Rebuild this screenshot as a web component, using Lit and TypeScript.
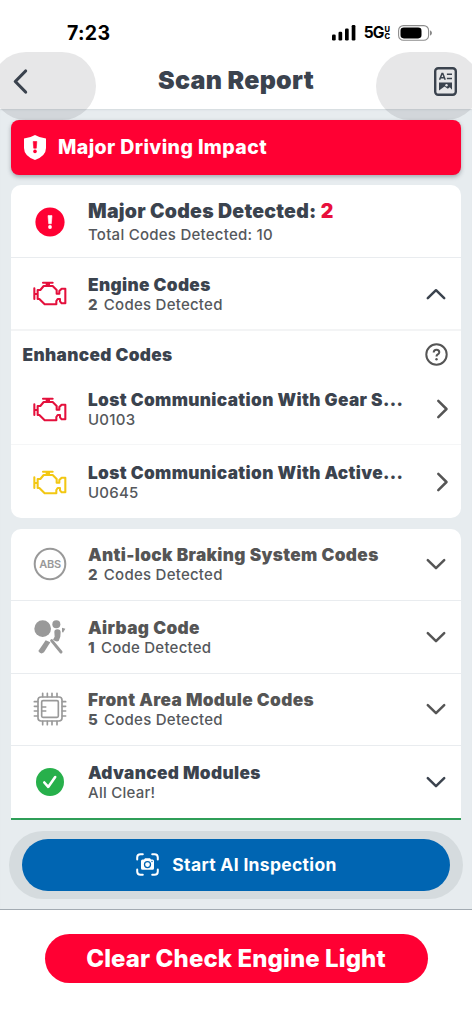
import { LitElement, html, css, svg, nothing } from "lit";
import { customElement } from "lit/decorators.js";
import { classMap } from "lit/directives/class-map.js";

type IconName = "alert" | "engine" | "abs" | "airbag" | "chip" | "check";
type Chevron = "up" | "down" | "right";

interface CodeRow {
  icon: IconName;
  tone: string;
  title: string;
  count?: string;
  sub: string;
  chevron: Chevron;
  muted?: boolean;
}

const engineRow: CodeRow = { icon: "engine", tone: "red", title: "Engine Codes", count: "2", sub: "Codes Detected", chevron: "up" };

const enhancedRows: CodeRow[] = [
  { icon: "engine", tone: "red", title: "Lost Communication With Gear S...", sub: "U0103", chevron: "right" },
  { icon: "engine", tone: "yellow", title: "Lost Communication With Active...", sub: "U0645", chevron: "right" },
];

const moduleRows: CodeRow[] = [
  { icon: "abs", tone: "gray", title: "Anti-lock Braking System Codes", count: "2", sub: "Codes Detected", chevron: "down", muted: true },
  { icon: "airbag", tone: "gray", title: "Airbag Code", count: "1", sub: "Code Detected", chevron: "down", muted: true },
  { icon: "chip", tone: "gray", title: "Front Area Module Codes", count: "5", sub: "Codes Detected", chevron: "down", muted: true },
  { icon: "check", tone: "green", title: "Advanced Modules", sub: "All Clear!", chevron: "down" },
];

const pins = [96, 110, 124, 139];
const icons: Record<IconName, unknown> = {
  alert: html`<svg width="30" height="30" viewBox="0 0 30 30"><circle cx="15" cy="15" r="14.6" fill="currentColor"/><path d="M13 8.6h4l-.7 8.2h-2.6z" fill="#fff" stroke="#fff" stroke-width=".6" stroke-linejoin="round"/><circle cx="15" cy="20" r="1.9" fill="#fff"/></svg>`,
  engine: html`<svg width="34" height="25.33" viewBox="98 304 102 76" fill="none" stroke="currentColor" stroke-width="6.2" stroke-linejoin="round" stroke-linecap="round"><path d="M112 331H120L130 319H157L169 331V342H177V334L184 327H195V371H184L179 365V358H172L168 364V374H133L117 358H112V331M102 326V358M102 343H112M128 309.500H157M142.500 310V318"/><path d="M136 310H149V317H136Z" fill="currentColor" stroke="none"/></svg>`,
  abs: html`<svg width="34" height="34" viewBox="0 0 34 34"><circle cx="17" cy="17" r="15.3" fill="none" stroke="currentColor" stroke-width="2"/><text x="17.100" y="20.900" text-anchor="middle" font-size="11" font-weight="600" letter-spacing="-.2" fill="currentColor">ABS</text></svg>`,
  airbag: html`<svg width="34" height="36" viewBox="98 296 102 108" fill="currentColor"><circle cx="127" cy="325" r="25"/><circle cx="168" cy="312" r="12"/><path d="M162 335Q162 327 171 327Q181 327 181 336L180 349L175 362Q168 366 158 358L163 349Z"/><path d="M185 322L195 325L188 337L185 334Z"/><path d="M154 361L182 395" stroke="currentColor" stroke-width="9" stroke-linecap="round"/><path d="M136 360L150 366L131 396Q121 404 114 392Z"/></svg>`,
  chip: html`<svg width="34" height="34" viewBox="98 67 102 102" fill="none" stroke="currentColor" stroke-width="5"><rect x="113" y="82" width="72" height="72" rx="9"/><rect x="124" y="93" width="50" height="50" rx="4"/><path d="M125 112H138M125 124H138"/>${pins.map(
    (p) => svg`<path stroke-linecap="round" d=${`M${p + 31} 71V81M${p + 31} 155V165M102 ${p}H112M186 ${p}H196`}/>`
  )}</svg>`,
  check: html`<svg width="28" height="28" viewBox="0 0 28 28"><circle cx="14" cy="14" r="14" fill="currentColor"/><path d="M8.300 14.500L12.200 18.900L19.200 9" fill="none" stroke="#fff" stroke-width="2.600" stroke-linecap="round" stroke-linejoin="round"/></svg>`,
};

const chevronPaths: Record<Chevron, string> = {
  up: "M2.800 15.200L11 7.200L19.200 15.200",
  down: "M2.800 7.200L11 15.200L19.200 7.200",
  right: "M13.300 2.800L21.500 11L13.300 19.200",
};

@customElement("app-root")
export class AppRoot extends LitElement {
  static styles = css`
    :host { display: flex; flex-direction: column; box-sizing: border-box; width: 100%; height: 1024px; overflow: hidden; background: #fff; color: #3b434e; font-family: Inter, "Liberation Sans", sans-serif; }
    * { box-sizing: border-box; }
    svg { display: block; flex: none; }
    .status { display: flex; justify-content: space-between; align-items: center; height: 52px; flex: none; padding: 13px 39px 0 67px; color: #000; }
    .time { font-size: 19.5px; font-weight: 700; line-height: 24px; letter-spacing: 0.3px; }
    .signals { display: flex; align-items: center; }
    .network { display: flex; align-items: center; margin: 0 8px 0 8px; font-size: 15.5px; font-weight: 650; line-height: 16px; letter-spacing: -0.9px; }
    .uc { display: flex; flex-direction: column; margin-left: 1px; font-size: 7.5px; line-height: 7px; font-weight: 800; letter-spacing: 0; }
    .header { display: grid; grid-template-columns: 104px 1fr 104px; height: 56.5px; flex: none; margin: 0 -8px; position: relative; z-index: 1; }
    .touch { height: 68px; border-radius: 34px; background: rgba(60, 60, 67, 0.12); display: flex; padding-top: 15px; }
    .back { padding-left: 20px; }
    .doc { padding-left: 58px; }
    .heading { margin: 0; text-align: center; font-size: 25px; font-weight: 900; letter-spacing: 0.28px; line-height: 57px; }
    .body { flex: none; height: 801.5px; padding: 11.5px 11px 0; background: #e7ecef; display: flex; flex-direction: column; border-bottom: 1.5px solid #a3abb2; box-shadow: inset 0 2px 2px -1px rgba(60, 70, 80, 0.1); }
    .banner { display: flex; align-items: center; gap: 12px; height: 54.5px; flex: none; padding-left: 13px; border-radius: 8px; background: #ff0033; color: #fff; font-size: 19.5px; font-weight: 850; letter-spacing: 0.39px; position: relative; z-index: 2; box-shadow: 0 2px 4px rgba(60, 70, 80, 0.4); }
    .card { background: #fff; border-radius: 10px; margin-top: 10.5px; flex: none; }
    .modules { margin-top: 11px; border-radius: 10px 10px 0 0; border-bottom: 2.500px solid #2f9e58; }
    .row { display: grid; grid-template-columns: 77px 1fr 36px; align-items: center; height: 72.5px; border-bottom: 1.500px solid #e9ecef; }
    .row:last-child { border-bottom: 0; }
    .modules .row:last-child { height: 71.5px; }
    .icon { display: flex; justify-content: center; padding-top: 2px; }
    .right, .up { padding-top: 2px; }
    .modules .icon { padding-top: 0; }
    .text { padding-top: 3px; }
    .modules .text { padding-top: 2px; }
    .title { font-size: 17.25px; line-height: 20px; font-weight: 900; letter-spacing: 0.34px; white-space: nowrap; }
    .sub { font-size: 15px; line-height: 20px; font-weight: 450; letter-spacing: 0.25px; color: #55585c; }
    .count { font-weight: 850; margin-right: 6px; }
    .muted, .right { color: #555; }
    .muted .title { color: #555; }
    .summary .title { font-size: 19.5px; line-height: 24px; letter-spacing: 0.24px; }
    .summary .sub { line-height: 24px; }
    .summary .text { padding-top: 4.5px; }
    .red { color: #e4103c; }
    .bright { color: #ff0033; }
    .total { color: #e8103c; }
    .yellow { color: #f2c713; }
    .gray { color: #999; }
    .green { color: #27b04b; }
    .expanded { height: 73px; border-bottom: 2px solid #f3f4f5; }
    .section { display: flex; align-items: center; justify-content: space-between; height: 42px; padding: 6px 13px 0 11.5px; }
    .enhanced .row { border-bottom-color: #f5f6f7; }
    .enhanced .row:last-child { border-bottom: 0; }
    .inspect-ring { height: 67.5px; flex: none; margin: 11.5px -2px 0; padding: 7.500px 13px; border-radius: 34px; background: #d5dbde; display: flex; }
    .inspect { flex: 1; height: 52px; border-radius: 26px; background: #0065b2; display: flex; align-items: center; justify-content: center; gap: 13px; padding-left: 1px; color: #fff; font-size: 17.5px; font-weight: 750; letter-spacing: 0.31px; }
    .footer { flex: 1; padding: 23.500px 44.500px 0; }
    .clear { height: 49px; border-radius: 25px; background: #ff0033; color: #fff; display: flex; align-items: center; justify-content: center; font-size: 24px; font-weight: 850; letter-spacing: 0.1px; }
  `;

  private chevron(dir: Chevron) {
    return html`<svg width="24" height="22" viewBox="0 0 24 22" fill="none" stroke="currentColor" stroke-width="2.500" stroke-linecap="round" stroke-linejoin="round"><path d=${chevronPaths[dir]}/></svg>`;
  }

  private row(r: CodeRow) {
    return html`<div class=${classMap({ row: true, muted: !!r.muted, expanded: r.chevron === "up" })}>
      <div class="icon ${r.tone}">${icons[r.icon]}</div>
      <div class="text">
        <div class="title">${r.title}</div>
        <div class="sub">${r.count ? html`<span class="count">${r.count}</span>` : nothing}${r.sub}</div>
      </div>
      <div class=${r.chevron}>${this.chevron(r.chevron)}</div>
    </div>`;
  }

  render() {
    return html`
      <div class="status">
        <div class="time">7:23</div>
        <div class="signals">
          <svg width="24" height="16" viewBox="0 0 24 16"><rect y="9.500" width="3.700" height="6" rx="1.200"/><rect x="6.500" y="6.800" width="3.700" height="8.700" rx="1.200"/><rect x="13" y="3.500" width="3.700" height="12" rx="1.200"/><rect x="19.700" width="3.700" height="15.500" rx="1.200"/></svg>
          <div class="network"><span>5G</span><span class="uc"><span>U</span><span>C</span></span></div>
          <svg width="35" height="16" viewBox="0 0 35 16"><rect x=".6" y=".6" width="30" height="14.600" rx="4.800" fill="none" stroke="#8c8c8c" stroke-width="1.100"/><rect x="2.500" y="2.400" width="21" height="11" rx="3.300"/><path d="M32 5.300Q34 6.500 34 8T32 10.700Z" fill="#888"/></svg>
        </div>
      </div>
      <div class="header">
        <div class="touch back"><svg width="18" height="28" viewBox="0 0 18 28" fill="none" stroke="currentColor" stroke-width="3.200" stroke-linecap="round" stroke-linejoin="round"><path d="M13.600 4L3.300 14.500L13.600 25"/></svg></div>
        <h1 class="heading">Scan Report</h1>
        <div class="touch doc"><svg width="23" height="29" viewBox="0 0 23 29" fill="none" stroke="currentColor"><rect x="1.200" y="1.200" width="20.600" height="26.600" rx="3" stroke-width="2.400"/><path d="M5.600 12.800L8 6.500H8.800L11.200 12.800M6.500 10.800H10.300" stroke-width="1.500"/><path d="M12.900 7.200H18M12.900 11.600H18" stroke-width="1.500"/><path d="M5 15.500H18V22.800L15.800 20.300L13.800 21.800L10.500 19.500L5 23.500Z" fill="currentColor" stroke="none"/><circle cx="12.500" cy="18.200" r="1.200" fill="#e6e6e9" stroke="none"/></svg></div>
      </div>
      <div class="body">
        <div class="banner">
          <svg width="22" height="25" viewBox="0 0 22 25"><path d="M11 0Q16 3 22 3.500V13Q22 21 11 25Q0 21 0 13V3.500Q6 3 11 0Z" fill="#fff"/><path d="M9.200 6.500h3.600l-.5 6.700h-2.600z" fill="#ff0033" stroke="#ff0033" stroke-width=".6" stroke-linejoin="round"/><circle cx="11" cy="16.400" r="1.800" fill="#ff0033"/></svg>
          <span>Major Driving Impact</span>
        </div>
        <div class="card">
          <div class="row summary">
            <div class="icon bright">${icons.alert}</div>
            <div class="text">
              <div class="title">Major Codes Detected: <span class="total">2</span></div>
              <div class="sub">Total Codes Detected: 10</div>
            </div>
          </div>
          ${this.row(engineRow)}
          <div class="enhanced">
            <div class="section">
              <span class="title">Enhanced Codes</span>
              <svg width="23" height="23" viewBox="0 0 23 23" fill="none" stroke="#555" stroke-width="2"><circle cx="11.500" cy="11.500" r="10.200"/><path d="M8.700 9.500Q8.700 6.700 11.500 6.700Q14.300 6.700 14.300 9.200Q14.300 10.600 12.500 11.600Q11.500 12.200 11.500 13.400"/><circle cx="11.500" cy="16.200" r="1.200" fill="#555" stroke="none"/></svg>
            </div>
            ${enhancedRows.map((r) => this.row(r))}
          </div>
        </div>
        <div class="card modules">${moduleRows.map((r) => this.row(r))}</div>
        <div class="inspect-ring">
          <div class="inspect">
            <svg width="23" height="23" viewBox="0 0 23 23" fill="none" stroke="#fff" stroke-width="2" stroke-linecap="round"><path d="M1.200 6.500V4.500Q1.200 1.200 4.500 1.200H6.800M16.200 1.200H18.500Q21.800 1.200 21.800 4.500V6.500M21.800 16.500V18.500Q21.800 21.800 18.500 21.800H16.200M6.800 21.800H4.500Q1.200 21.800 1.200 18.500V16.500"/><path d="M6.500 6.500H8L9 5.300H14L15 6.500H16.500Q18 6.500 18 8V15.200Q18 16.700 16.500 16.700H6.500Q5 16.700 5 15.200V8Q5 6.500 6.500 6.500Z" fill="#fff" stroke="none"/><circle cx="11.500" cy="11.600" r="3" stroke="#0065b2" stroke-width="1.300"/><circle cx="16" cy="8.500" r=".7" fill="#0065b2" stroke="none"/></svg>
            <span>Start AI Inspection</span>
          </div>
        </div>
      </div>
      <div class="footer"><div class="clear">Clear Check Engine Light</div></div>
    `;
  }
}
